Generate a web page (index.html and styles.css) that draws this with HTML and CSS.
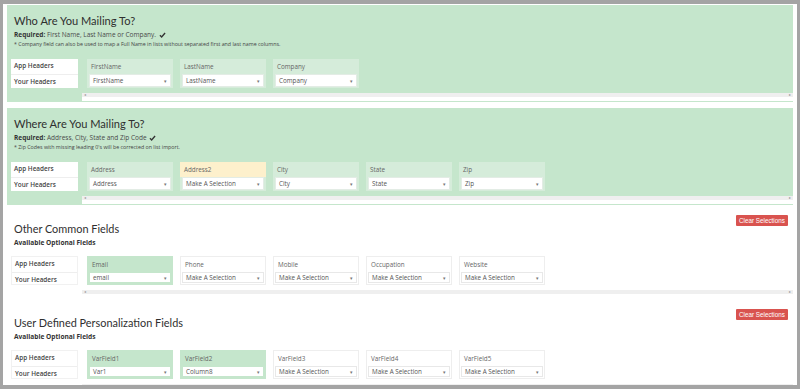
FILE: index.html
```html
<!DOCTYPE html>
<html>
<head>
<meta charset="utf-8">
<link rel="stylesheet" href="styles.css">
</head>
<body>
<div class="frame">
  <section class="sec green s1">
    <h2>Who Are You Mailing To?</h2>
    <p class="req"><b>Required:</b> First Name, Last Name or Company. <svg class="chk" viewBox="0 0 8 7" width="7" height="6"><path d="M1 3.8 L3 5.8 L7 1.2" fill="none" stroke="#333" stroke-width="1.6"/></svg></p>
    <p class="note">* Company field can also be used to map a Full Name in lists without separated first and last name columns.</p>
    <div class="map">
      <div class="labels"><div>App Headers</div><div>Your Headers</div></div>
      <div class="scroll">
        <div class="cols">
          <div class="col"><div class="ch">FirstName</div><div class="sel"><span>FirstName</span><i>&#9662;</i></div></div>
          <div class="col"><div class="ch">LastName</div><div class="sel"><span>LastName</span><i>&#9662;</i></div></div>
          <div class="col"><div class="ch">Company</div><div class="sel"><span>Company</span><i>&#9662;</i></div></div>
        </div>
        <div class="sbar"><span>&#9666;</span><span>&#9656;</span></div>
      </div>
    </div>
  </section>

  <section class="sec green s2">
    <h2>Where Are You Mailing To?</h2>
    <p class="req"><b>Required:</b> Address, City, State and Zip Code <svg class="chk" viewBox="0 0 8 7" width="7" height="6"><path d="M1 3.8 L3 5.8 L7 1.2" fill="none" stroke="#333" stroke-width="1.6"/></svg></p>
    <p class="note">* Zip Codes with missing leading 0's will be corrected on list import.</p>
    <div class="map">
      <div class="labels"><div>App Headers</div><div>Your Headers</div></div>
      <div class="scroll">
        <div class="cols">
          <div class="col"><div class="ch">Address</div><div class="sel"><span>Address</span><i>&#9662;</i></div></div>
          <div class="col warn"><div class="ch">Address2</div><div class="sel"><span>Make A Selection</span><i>&#9662;</i></div></div>
          <div class="col"><div class="ch">City</div><div class="sel"><span>City</span><i>&#9662;</i></div></div>
          <div class="col"><div class="ch">State</div><div class="sel"><span>State</span><i>&#9662;</i></div></div>
          <div class="col"><div class="ch">Zip</div><div class="sel"><span>Zip</span><i>&#9662;</i></div></div>
        </div>
        <div class="sbar"><span>&#9666;</span><span>&#9656;</span></div>
      </div>
    </div>
  </section>

  <section class="sec plain s3">
    <div class="top">
      <h2>Other Common Fields</h2>
      <button class="clear">Clear Selections</button>
    </div>
    <p class="avail">Available Optional Fields</p>
    <div class="map">
      <div class="labels"><div>App Headers</div><div>Your Headers</div></div>
      <div class="scroll">
        <div class="cols">
          <div class="col on"><div class="ch">Email</div><div class="sel"><span>email</span><i>&#9662;</i></div></div>
          <div class="col"><div class="ch">Phone</div><div class="sel"><span>Make A Selection</span><i>&#9662;</i></div></div>
          <div class="col"><div class="ch">Mobile</div><div class="sel"><span>Make A Selection</span><i>&#9662;</i></div></div>
          <div class="col"><div class="ch">Occupation</div><div class="sel"><span>Make A Selection</span><i>&#9662;</i></div></div>
          <div class="col"><div class="ch">Website</div><div class="sel"><span>Make A Selection</span><i>&#9662;</i></div></div>
        </div>
        <div class="sbar"><span>&#9666;</span><span>&#9656;</span></div>
      </div>
    </div>
  </section>

  <section class="sec plain s4">
    <div class="top">
      <h2>User Defined Personalization Fields</h2>
      <button class="clear">Clear Selections</button>
    </div>
    <p class="avail">Available Optional Fields</p>
    <div class="map">
      <div class="labels"><div>App Headers</div><div>Your Headers</div></div>
      <div class="scroll">
        <div class="cols">
          <div class="col on"><div class="ch">VarField1</div><div class="sel"><span>Var1</span><i>&#9662;</i></div></div>
          <div class="col on"><div class="ch">VarField2</div><div class="sel"><span>Column8</span><i>&#9662;</i></div></div>
          <div class="col"><div class="ch">VarField3</div><div class="sel"><span>Make A Selection</span><i>&#9662;</i></div></div>
          <div class="col"><div class="ch">VarField4</div><div class="sel"><span>Make A Selection</span><i>&#9662;</i></div></div>
          <div class="col"><div class="ch">VarField5</div><div class="sel"><span>Make A Selection</span><i>&#9662;</i></div></div>
        </div>
        <div class="sbar"><span>&#9666;</span><span>&#9656;</span></div>
      </div>
    </div>
  </section>
</div>
</body>
</html>
```
FILE: styles.css
```css
* { box-sizing: border-box; }
html, body { margin: 0; padding: 0; background: #fff; }
body { font-family: "Open Sans", "Noto Sans", sans-serif; color: #333; }

.frame {
  width: 800px;
  height: 389px;
  overflow: hidden;
  border: 3px solid #a4a4a4;
  border-top-width: 4px;
  border-bottom-width: 4px;
  padding: 1px 4px 0 4px;
  display: flex;
  flex-direction: column;
}

.sec { padding: 0 0 1px 4px; flex: none; }
.green { background: #c5e6cc; }
.s2 { margin-top: 6px; }
.s3 { margin-top: 8px; }
.s4 { margin-top: 8px; }

h2 {
  margin: 7px 0 0 3px;
  font-family: Lato, "Open Sans", sans-serif;
  font-size: 11.1px;
  line-height: 18px;
  font-weight: 400;
  color: #2f2f2f;
}
.plain h2 { font-size: 10.9px; }

.req {
  margin: 0 0 0 3px;
  font-size: 6.5px;
  line-height: 10px;
  color: #4a4a4a;
}
.req b { font-weight: 700; color: #333; }
.chk { vertical-align: -0.5px; margin-left: 1px; }

.note {
  margin: 0 0 0 3px;
  font-size: 5.3px;
  line-height: 8px;
  color: #444;
}

.map { display: flex; margin-top: 11px; }
.s3 .map, .s4 .map { margin-top: 8px; }

.labels {
  width: 67px;
  height: 29px;
  background: #fff;
  font-size: 6.4px;
  font-weight: 600;
  color: #444;
  display: flex;
  flex-direction: column;
  flex: none;
}
.labels div { height: 14.5px; line-height: 14.5px; padding-left: 3px; }
.labels div + div { border-top: 1px solid #eee; }
.plain .labels { border: 1px solid #f1f1f1; }

.scroll { flex: 1; margin-left: 4px; min-width: 0; }
.cols { display: flex; gap: 7px; padding-left: 5px; height: 29px; }

.col {
  width: 86px;
  flex: none;
  background: #d5ecda;
  padding: 0 2px 1px;
  display: flex;
  flex-direction: column;
}
.ch {
  height: 15px;
  line-height: 15px;
  font-size: 6.3px;
  color: #666;
  padding-left: 2px;
}
.sel {
  height: 13px;
  background: #fff;
  border: 1px solid #e3ece5;
  display: flex;
  align-items: center;
  justify-content: space-between;
  padding: 0 3px 0 3px;
  font-size: 6.3px;
  color: #555;
}
.sel i { font-style: normal; font-size: 5px; color: #777; }

.col.warn .ch { background: #fdf0cc; margin: 0 -2px; padding-left: 4px; }

.plain .col { background: #fff; border: 1px solid #eee; padding: 0 1px 1px; }
.plain .col .ch { padding-left: 3px; }
.plain .col .sel { border-color: #e8e8e8; }
.plain .col.on { background: #c5e6cc; border-color: #c5e6cc; }
.plain .col.on .sel { border-color: #c5e6cc; }

.sbar {
  margin-top: 5px;
  height: 8px;
  background: linear-gradient(#efefef 0 4px, #fff 4px);
  display: flex;
  justify-content: space-between;
  padding: 0 2px 0 2px;
  font-size: 4px;
  line-height: 4px;
  color: #999;
}

.top { display: flex; justify-content: space-between; align-items: flex-start; }
.clear {
  margin: 2px 5px 0 0;
  height: 11px;
  width: 52px;
  padding: 0;
  border: 0;
  border-radius: 1px;
  background: #d9534f;
  color: #fff;
  font-family: "Liberation Sans", Arial, sans-serif;
  font-size: 6.3px;
  line-height: 11px;
  white-space: nowrap;
}

.avail {
  margin: 0 0 0 3px;
  font-size: 6.6px;
  line-height: 10px;
  font-weight: 700;
  color: #333;
}
```
